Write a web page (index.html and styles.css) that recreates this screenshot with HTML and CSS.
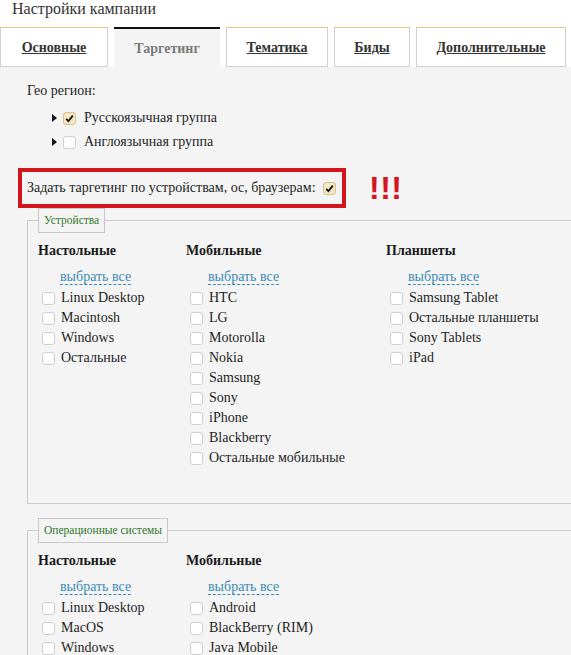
FILE: index.html
```html
<!DOCTYPE html>
<html>
<head>
<meta charset="utf-8">
<title>Настройки кампании</title>
<link rel="stylesheet" href="styles.css">
</head>
<body>
<div class="title">Настройки кампании</div>
<nav class="tabs">
  <a class="tab t1">Основные</a>
  <a class="tab t2 active">Таргетинг</a>
  <a class="tab t3">Тематика</a>
  <a class="tab t4">Биды</a>
  <a class="tab t5">Дополнительные</a>
</nav>
<main class="panel">
  <div class="geo-label">Гео регион:</div>
  <ul class="geo-list">
    <li><span class="tri"></span><span class="cb checked"><svg viewBox="0 0 13 13" width="13" height="13"><path d="M3.2 6.8 L5.4 9.2 L9.8 3.6" fill="none" stroke="#111" stroke-width="1.8"/></svg></span>Русскоязычная группа</li>
    <li><span class="tri"></span><span class="cb"></span>Англоязычная группа</li>
  </ul>
  <div class="target-row">
    <div class="target-box">Задать таргетинг по устройствам, ос, браузерам:<span class="cb checked"><svg viewBox="0 0 13 13" width="13" height="13"><path d="M3.2 6.8 L5.4 9.2 L9.8 3.6" fill="none" stroke="#111" stroke-width="1.8"/></svg></span></div>
    <span class="alert">!!!</span>
  </div>
  <fieldset class="group g1">
    <legend>Устройства</legend>
    <div class="cols">
      <div class="col c1">
        <h3>Настольные</h3>
        <div class="sel"><a class="select-all">выбрать все</a></div>
        <ul class="items">
          <li><span class="cb"></span>Linux Desktop</li>
          <li><span class="cb"></span>Macintosh</li>
          <li><span class="cb"></span>Windows</li>
          <li><span class="cb"></span>Остальные</li>
        </ul>
      </div>
      <div class="col c2">
        <h3>Мобильные</h3>
        <div class="sel"><a class="select-all">выбрать все</a></div>
        <ul class="items">
          <li><span class="cb"></span>HTC</li>
          <li><span class="cb"></span>LG</li>
          <li><span class="cb"></span>Motorolla</li>
          <li><span class="cb"></span>Nokia</li>
          <li><span class="cb"></span>Samsung</li>
          <li><span class="cb"></span>Sony</li>
          <li><span class="cb"></span>iPhone</li>
          <li><span class="cb"></span>Blackberry</li>
          <li><span class="cb"></span>Остальные мобильные</li>
        </ul>
      </div>
      <div class="col c3">
        <h3>Планшеты</h3>
        <div class="sel"><a class="select-all">выбрать все</a></div>
        <ul class="items">
          <li><span class="cb"></span>Samsung Tablet</li>
          <li><span class="cb"></span>Остальные планшеты</li>
          <li><span class="cb"></span>Sony Tablets</li>
          <li><span class="cb"></span>iPad</li>
        </ul>
      </div>
    </div>
  </fieldset>
  <fieldset class="group g2">
    <legend>Операционные системы</legend>
    <div class="cols">
      <div class="col c1">
        <h3>Настольные</h3>
        <div class="sel"><a class="select-all">выбрать все</a></div>
        <ul class="items">
          <li><span class="cb"></span>Linux Desktop</li>
          <li><span class="cb"></span>MacOS</li>
          <li><span class="cb"></span>Windows</li>
        </ul>
      </div>
      <div class="col c2">
        <h3>Мобильные</h3>
        <div class="sel"><a class="select-all">выбрать все</a></div>
        <ul class="items">
          <li><span class="cb"></span>Android</li>
          <li><span class="cb"></span>BlackBerry (RIM)</li>
          <li><span class="cb"></span>Java Mobile</li>
        </ul>
      </div>
    </div>
  </fieldset>
</main>
</body>
</html>
```

FILE: styles.css
```css
html, body {
  margin: 0;
  padding: 0;
  background: #fff;
}
body {
  font-family: "Liberation Serif", "Times New Roman", serif;
  font-size: 14px;
  color: #1e1e1e;
  width: 571px;
  height: 655px;
  overflow: hidden;
}
.title {
  height: 27px;
  line-height: 17px;
  padding-left: 12px;
  font-size: 16px;
  color: #333;
  box-sizing: border-box;
}
.tabs {
  display: flex;
  gap: 6px;
  height: 40px;
}
.tab {
  box-sizing: border-box;
  height: 40px;
  display: flex;
  align-items: center;
  justify-content: center;
  background: #fff;
  border-top: 1px solid #e3c67c;
  border-left: 1px solid #d0d0d0;
  border-right: 1px solid #d0d0d0;
  border-bottom: 1px solid #d0d0d0;
  font-weight: bold;
  color: #333;
  text-decoration: underline;
  padding-top: 2px;
}
.tab.active {
  background: #f4f4f4;
  border: none;
  border-top: 2px solid #111;
  color: #7a7a7a;
  text-decoration: none;
}
.t1 { width: 108px; }
.t2 { width: 106px; }
.t3 { width: 102px; }
.t4 { width: 76px; }
.t5 { width: 150px; }

.panel {
  background: #f4f4f4;
  padding-left: 18px;
  height: 600px;
  overflow: hidden;
}
.geo-label {
  margin-left: 9px;
  padding-top: 14px;
  line-height: 20px;
}
.geo-list {
  list-style: none;
  margin: 5px 0 0 0;
  padding: 0 0 0 34px;
}
.geo-list li {
  display: flex;
  align-items: center;
  height: 24px;
}
.tri {
  width: 0;
  height: 0;
  border-top: 4px solid transparent;
  border-bottom: 4px solid transparent;
  border-left: 5px solid #111;
  margin-right: 6px;
}
.cb {
  box-sizing: border-box;
  width: 13px;
  height: 13px;
  border: 1px solid #cfcfcf;
  border-radius: 3px;
  background: #fff;
  display: inline-flex;
  align-items: center;
  justify-content: center;
  flex: none;
}
.cb svg {
  display: block;
  margin: -1px;
}
.cb.checked {
  background: #f6e6c4;
  border-color: #d9c08c;
}
.geo-list .cb {
  margin-right: 8px;
}
.target-row {
  display: flex;
  align-items: center;
  margin-top: 14px;
}
.target-box {
  box-sizing: border-box;
  height: 40px;
  border: 4px solid #d2141c;
  display: flex;
  align-items: center;
  padding: 0 7px 0 5px;
  width: 328px;
  white-space: nowrap;
}
.target-box .cb {
  margin-left: 7px;
}
.alert {
  font-family: "Liberation Sans", Arial, sans-serif;
  font-weight: bold;
  font-size: 32px;
  color: #d7141d;
  margin-left: 23px;
  letter-spacing: 0.5px;
  line-height: 30px;
}
.group {
  margin: 0 0 0 9px;
  padding: 9px 0 35px 10px;
  border: 1px solid #cccccc;
  border-right: none;
  min-width: 0;
}
.g2 {
  margin-top: 14px;
}
.group legend {
  border: 1px solid #c8c8c8;
  padding: 3px 5px;
  font-size: 11.5px;
  line-height: 17px;
  color: #2f7a28;
  margin: 0;
}
.cols {
  display: flex;
}
.c1 { width: 148px; }
.c2 { width: 200px; }
.c3 { width: 180px; }
.col h3 {
  margin: 0;
  font-size: 14px;
  font-weight: bold;
  line-height: 18px;
  color: #1a1a1a;
}
.sel {
  margin-top: 7px;
  height: 21px;
  line-height: 19px;
  padding-left: 22px;
}
.select-all {
  color: #3a8bb4;
  border-bottom: 1px dashed #3a8bb4;
}
.items {
  list-style: none;
  margin: 0;
  padding: 0 0 0 4px;
}
.items li {
  display: flex;
  align-items: center;
  height: 20px;
}
.items .cb {
  margin-right: 6px;
}
```
